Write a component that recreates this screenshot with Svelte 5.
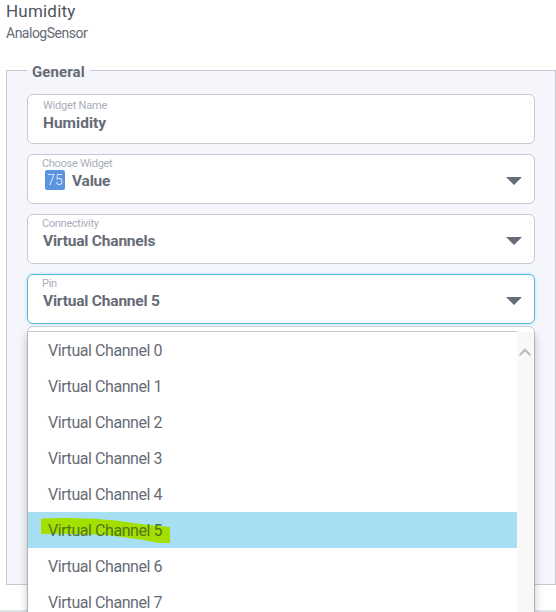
<script>
  const fields = [
    { label: 'Widget Name', value: 'Humidity', kind: 'text' },
    { label: 'Choose Widget', value: 'Value', kind: 'select', badge: '75' },
    { label: 'Connectivity', value: 'Virtual Channels', kind: 'select' },
    { label: 'Pin', value: 'Virtual Channel 5', kind: 'select', open: true }
  ];
  const options = Array.from({ length: 8 }, (_, i) => `Virtual Channel ${i}`);
  const selected = 5;
</script>

<main>
  <header>
    <h1>Humidity</h1>
    <p>AnalogSensor</p>
  </header>

  <section class="group">
    <h2>General</h2>
    {#each fields as f}
      <div class="field" class:text={f.kind === 'text'} class:open={f.open}>
        <span class="label">{f.label}</span>
        <div class="value">
          {#if f.badge}<span class="badge">{f.badge}</span>{/if}
          <strong>{f.value}</strong>
        </div>
        {#if f.kind === 'select'}
          <svg class="arrow" width="16" height="8" viewBox="0 0 16 8"><path d="M0 0H16L8 8Z" fill="#666c77" /></svg>
        {/if}
        {#if f.open}
          <div class="menu">
            <ul>
              {#each options as o, i}
                <li class:selected={i === selected}>
                  {#if i === selected}
                    <svg class="marker" width="130" height="28" viewBox="0 0 130 28"><path d="M0 2.5Q40 1 75 4.5Q104 9 129 11V27H118Q84 20 55 18.5Q25 17.5 0 18Z" fill="#a3e000" /></svg>
                  {/if}
                  <span>{o}</span>
                </li>
              {/each}
            </ul>
            <div class="scroll">
              <svg width="12" height="10" viewBox="0 0 12 10"><path d="M.5 8.5V5.8L6 .3L11.5 5.8V8.5L6 3.4Z" fill="#bcbcbc" /></svg>
            </div>
          </div>
        {/if}
      </div>
    {/each}
    <div class="field next"></div>
  </section>
  <footer></footer>
</main>

<style>
  :global(body) { overflow: hidden; background: #fff; }
  main {
    box-sizing: border-box;
    display: flex;
    flex-direction: column;
    width: 556px;
    height: 612px;
    overflow: hidden;
    font-family: Roboto, "Liberation Sans", sans-serif;
    color: #666b75;
  }
  header { flex: none; height: 70px; padding-left: 6px; box-sizing: border-box; }
  h1, h2, p, ul { margin: 0; padding: 0; font-weight: 400; }
  h1 { font-size: 17px; line-height: 22px; letter-spacing: .2px; color: #4e535d; }
  p { font-size: 14px; line-height: 22px; letter-spacing: -.5px; }
  .group {
    position: relative;
    box-sizing: border-box;
    flex: none;
    height: 515px;
    margin-left: 6px;
    padding: 23px 20px 0;
    display: flex;
    flex-direction: column;
    gap: 10px;
    border: 1px solid #c6c9d2;
    background: #f5f6fb;
  }
  h2 {
    position: absolute;
    left: 20px;
    top: -10px;
    height: 20px;
    padding: 0 5px;
    font-size: 15px;
    line-height: 22px;
    font-weight: 700;
    letter-spacing: .1px;
    background: linear-gradient(#fff 0 9px, #f5f6fb 9px);
  }
  .field {
    position: relative;
    box-sizing: border-box;
    flex: none;
    width: 508px;
    height: 50px;
    padding: 2px 14px 0;
    border: 1px solid #c7cad3;
    border-radius: 6px;
    background: #fff;
  }
  .label { display: block; font-size: 11px; line-height: 13px; letter-spacing: -.3px; color: #a9aeb9; }
  .text { padding-top: 4px; }
  .text .label { padding-left: 1px; letter-spacing: -.2px; }
  .text strong { letter-spacing: 0; }
  .value { display: flex; align-items: center; height: 22px; padding-left: 1px; }
  strong { font-size: 15.5px; line-height: 20px; font-weight: 700; letter-spacing: -.2px; white-space: nowrap; }
  .badge {
    width: 20px;
    height: 20px;
    margin: -2px 7px 0 2px;
    border-radius: 2px;
    background: #5b93e1;
    color: #e8f2ff;
    font-size: 14px;
    line-height: 21px;
    font-weight: 300;
    text-align: center;
  }
  .arrow { position: absolute; right: 12px; top: 22px; }
  .open { border-color: #57b7db; box-shadow: 0 0 4px #b8e4f6; z-index: 2; }
  .next { height: 300px; margin-top: -8px; }
  .menu {
    position: absolute;
    left: 0;
    top: 56px;
    display: flex;
    width: 506px;
    height: 290px;
    background: #fff;
    box-shadow: 0 4px 9px #0004;
    clip-path: inset(0 -12px -12px -12px);
  }
  ul { width: 489px; border-top: 1px solid #c7cad3; list-style: none; }
  li { position: relative; height: 36px; padding-left: 20px; font-size: 16px; line-height: 37px; letter-spacing: -.43px; }
  li span { position: relative; }
  .selected { background: #a6dff3; }
  .selected span { color: #52741f; }
  .marker { position: absolute; left: 13px; top: 4px; }
  .scroll { width: 17px; margin-top: 1px; background: #f8f8f8; }
  .scroll svg { display: block; margin: 16px 0 0 2px; }
  footer { flex: none; height: 2px; margin-top: 25px; background: #e1e4ea; }
</style>
